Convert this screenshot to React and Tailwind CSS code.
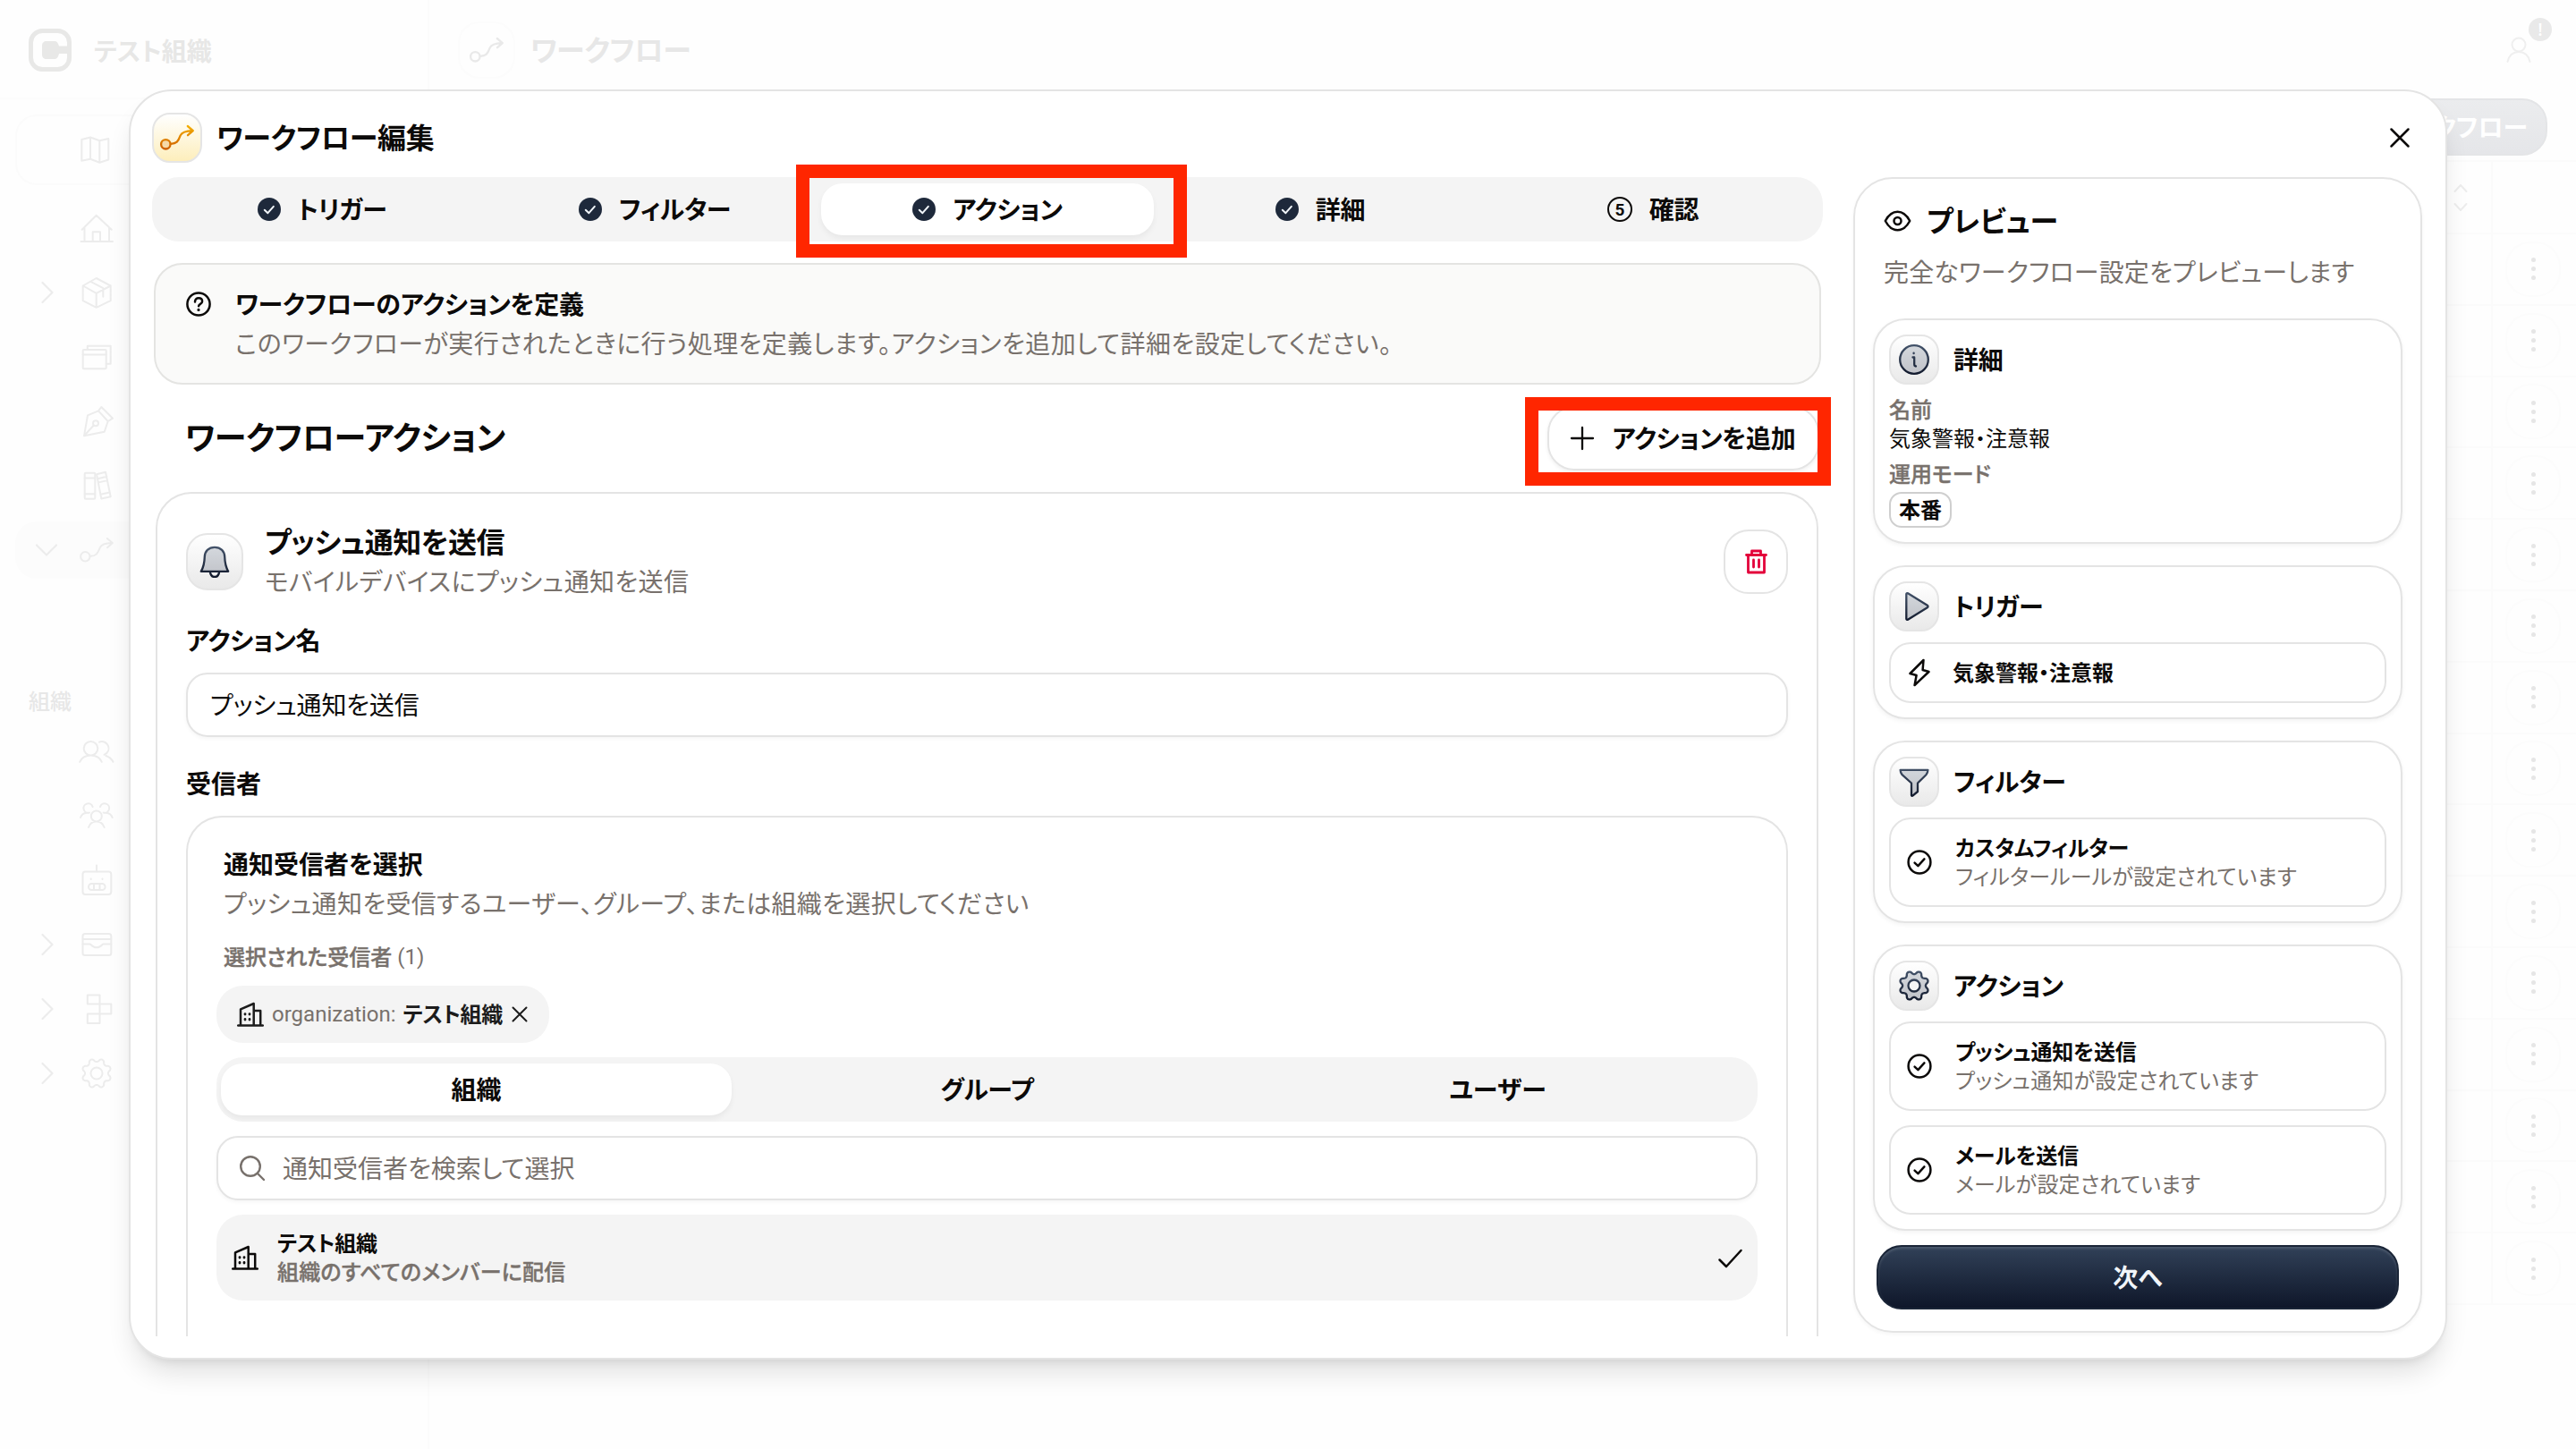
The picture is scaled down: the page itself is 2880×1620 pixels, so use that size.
import clsx from "clsx";

// ── Icons ────────────────────────────────────────────────────────────────────

function Svg({ size = 36, box, className, width = 2, children }) {
    return (
        <svg
            width={size}
            height={size}
            viewBox={box || `0 0 ${size} ${size}`}
            fill="none"
            stroke="currentColor"
            strokeWidth={width}
            strokeLinecap="round"
            strokeLinejoin="round"
            className={clsx("shrink-0 overflow-visible", className)}
        >
            {children}
        </svg>
    );
}

// Eight-toothed cog outline around (18, 18)
const gearOutline = Array.from({ length: 144 }, (_, i) => {
    const a = (i / 144) * Math.PI * 2;
    const wave = Math.cos(a * 8);
    const r = 14.7 - 1.8 * Math.sign(wave) * Math.pow(Math.abs(wave), 0.7);
    return `${i ? "L" : "M"}${(18 + r * Math.sin(a)).toFixed(2)} ${(18 - r * Math.cos(a)).toFixed(2)}`;
}).join("") + "Z";

const shapes = {
    map: <path d="M1.3 6L11 3.5l10.3 3.8 10-2.3v23.5l-10 3.3L11 27.7l-9.7 2zM11 3.5v24.2M21.3 7.3v24.5" />,
    home: <path d="M1.7 19.7l16-16 17 16M4.5 17.5V33M32 17.5V33M.5 33H36M13.7 33V22.3H22V33" />,
    box: <path d="M17.7 2l16 8.5v16.7l-16 7.6-15-7.6V10.5zM2.7 10.5l15 8.3 16-8.3M17.7 18.8v16M11 5.7l14.3 7.5v9.6" />,
    stack: (
        <>
            <rect x="2.7" y="10" width="26" height="21.3" rx="1" />
            <path d="M2.7 15.5h26M7.8 10V5.7h25.9v20h-5" />
        </>
    ),
    pen: (
        <>
            <path d="M4 34.3l4-23 12-5 10.7 11.7-4 11.7zM4 34.3l10.8-11.8M20 6.3L23.3 2 36 14.7 30.7 18" />
            <circle cx="17" cy="20.3" r="3" />
        </>
    ),
    books: (
        <>
            <rect x="4.7" y="3.8" width="11.6" height="29" rx="1" />
            <path d="M4.7 9.5h11.6M4.7 27.2h11.6M18 5.2l10-2.4 5.7 27.4-10.4 2.3zM19.2 10.2l10.2-2.4M20.2 14.4l10-2.3M22.3 27.8l10.4-2.3" />
        </>
    ),
    workflow: (
        <>
            <circle cx="5.3" cy="25.3" r="5.2" />
            <path d="M11 24.8c6.3 0 8.2-2.6 10.7-9.4C23.3 11.8 27 10.3 35.3 10.1M29.8 5l6 5.1-5.8 5.1" />
        </>
    ),
    users: (
        <path d="M11.5 7a7.8 7.8 0 100 15.6 7.8 7.8 0 000-15.6zM-.8 29.8c2.3-5 6.8-7.2 12.3-7.2s10 2.2 12.3 7.2M21 7.6c9-3.4 15.5 9.6 5.5 14.2M28.5 23c3.5 1.2 6.2 3.3 8 6.8" />
    ),
    team: (
        <path d="M17.8 12.5a6 6 0 100 12 6 6 0 000-12zM9 31c1.5-4.3 4.6-6.4 8.8-6.4s7.3 2.1 8.8 6.4M10 14.6A5.2 5.2 0 1113.6 8M0 20c1-3 3.4-5 7-5.2M25.6 14.6A5.2 5.2 0 1022 8M35.6 20c-1-3-3.4-5-7-5.2" />
    ),
    robot: (
        <>
            <rect x="2.5" y="8.5" width="31.8" height="25.5" rx="3" />
            <rect x="9" y="22" width="18.6" height="7" rx="3.5" />
            <path d="M18 1.5v7M15 22v7M21.5 22v7M11.7 16.5v.5M24.5 16.5v.5" />
        </>
    ),
    inbox: (
        <>
            <rect x="2.5" y="6" width="31.8" height="24" rx="2.5" />
            <path d="M2.5 12h31.8M2.5 17.5h8c1.5 0 2 3.8 7.5 3.8s6-3.8 7.5-3.8h8.8" />
        </>
    ),
    nodes: <path d="M7.8 2.5h13.7v10H7.8zM21.5 12.5h12.8v11H21.5zM7.8 23.5h13.7v10.5H7.8zM7.8 12.5h13.7v11" />,
    gear: (
        <>
            <path d={gearOutline} />
            <circle cx="18" cy="18" r="6.5" />
        </>
    ),
    bell: (
        <>
            <path d="M18 1.8C11 1.8 7 6.4 6.8 12.4 6.6 19.3 6 23.4 2.8 28.8h30.4C30 23.4 29.4 19.3 29.2 12.4 29 6.4 25 1.8 18 1.8z" />
            <path fill="none" d="M12.8 29.2c.6 3.8 2.4 5.8 5.2 5.8s4.6-2 5.2-5.8" />
        </>
    ),
    info: (
        <>
            <circle cx="18" cy="18" r="15.8" />
            <path fill="none" d="M16.5 15.5h1.7v7.6c0 1.6.7 2.4 1.8 2.4M17.6 10.6v.6" />
        </>
    ),
    play: <path d="M9.3 4.2v27.6c0 1 .9 1.4 1.7.9l21.8-13.4c1-.6 1-2 0-2.6L11 3.3c-.8-.5-1.7-.1-1.7.9z" />,
    funnel: <path d="M2.6 4.8h30.8c0 2.4-.8 4-2 5.4L22 19.5V29l-5.6 4.6c-.7.5-1.4.1-1.4-.7V19.5L4.6 10.2c-1.2-1.4-2-3-2-5.4z" />,
};

function Icon({ name, className, width }) {
    return <Svg className={className} width={width}>{shapes[name]}</Svg>;
}

// Duotone icon inside a rounded tile
function IconTile({ name, large }) {
    return (
        <div
            className={clsx(
                "flex shrink-0 items-center justify-center border-2 border-[#e5e5e5] bg-linear-to-b from-white to-[#e9e9e9]",
                large ? "size-16 rounded-[24px]" : "size-14 rounded-[20px]"
            )}
        >
            <svg width="36" height="36" viewBox="0 0 36 36" fill={`url(#${name}-fill)`} stroke={`url(#${name}-line)`} strokeWidth="2.3" strokeLinecap="round" strokeLinejoin="round">
                <defs>
                    <linearGradient id={`${name}-line`} gradientUnits="userSpaceOnUse" x1="0" y1="0" x2="0" y2="36">
                        <stop stopColor="#45556c" />
                        <stop offset="1" stopColor="#0f172a" />
                    </linearGradient>
                    <linearGradient id={`${name}-fill`} gradientUnits="userSpaceOnUse" x1="0" y1="0" x2="0" y2="36">
                        <stop stopColor="#d5d9de" />
                        <stop offset="1" stopColor="#bfc1c7" />
                    </linearGradient>
                </defs>
                {name === "gear" ? (
                    <>
                        <path d={gearOutline} />
                        <circle cx="18" cy="18" r="6.5" fill="#f5f5f5" />
                    </>
                ) : shapes[name]}
            </svg>
        </div>
    );
}

function WorkflowTile() {
    return (
        <div className="flex size-14 shrink-0 items-center justify-center rounded-[20px] border-2 border-[#e5e5e5] bg-linear-to-b from-white to-[#fdeebb]">
            <svg width="36" height="36" viewBox="0 0 36 36" fill="none" stroke="url(#flow-line)" strokeWidth="2.3" strokeLinecap="round" strokeLinejoin="round" className="overflow-visible">
                <defs>
                    <linearGradient id="flow-line" gradientUnits="userSpaceOnUse" x1="0" y1="4" x2="0" y2="32">
                        <stop stopColor="#f5b000" />
                        <stop offset="1" stopColor="#cc5a00" />
                    </linearGradient>
                </defs>
                <circle cx="5.3" cy="25.3" r="5.2" fill="#f6d9a8" />
                <path d="M11 24.8c6.3 0 8.2-2.6 10.7-9.4C23.3 11.8 27 10.3 35.3 10.1M29.8 5l6 5.1-5.8 5.1" />
            </svg>
        </div>
    );
}

function Building({ className }) {
    return (
        <svg width="30" height="28" viewBox="0 0 30 28" fill="none" stroke="currentColor" strokeWidth="2.5" strokeLinecap="round" strokeLinejoin="round" className={clsx("shrink-0", className)}>
            <path d="M1.2 26.6h27.6M4 26.6V8.4L18.7 2v24.6M18.7 10h7.5v16.6" />
            <path strokeWidth="2.8" d="M9 13.6v.5M14 13.6v.5M9 19.5v.5M14 19.5v.5" />
        </svg>
    );
}

function CheckBadge() {
    return (
        <Svg size={26} width={2} className="text-[#f1f5f9]">
            <circle cx="13" cy="13" r="13" fill="#1e293b" stroke="none" />
            <path d="M7.8 13.8l3.6 3.4 6.4-7.4" />
        </Svg>
    );
}

function CheckCircle() {
    return (
        <Svg size={28} width={2.5}>
            <circle cx="14" cy="14" r="12.4" />
            <path d="M8.6 14.6l3.8 3.6 7-7.8" />
        </Svg>
    );
}

// ── Page behind the dialog ───────────────────────────────────────────────────

const mainNav = [
    { icon: "home" },
    { icon: "box", caret: "right" },
    { icon: "stack" },
    { icon: "pen" },
    { icon: "books" },
    { icon: "workflow", caret: "down", active: true },
];

const orgNav = [
    { icon: "users" },
    { icon: "team" },
    { icon: "robot" },
    { icon: "inbox", caret: "right" },
    { icon: "nodes", caret: "right" },
    { icon: "gear", caret: "right" },
];

function NavRow({ icon, caret, active }) {
    return (
        <div className="flex h-[72px] items-center">
            <div className={clsx("flex h-16 flex-1 items-center rounded-3xl pl-[23px]", active && "bg-[#fcfcfc]")}>
                <div className="flex w-[50px]">
                    {caret && (
                        <Svg size={24} width={2.2}>
                            <path d={caret === "down" ? "M1 6.5l11 11 11-11" : "M7.5 1l11 11-11 11"} />
                        </Svg>
                    )}
                </div>
                <Icon name={icon} />
            </div>
        </div>
    );
}

function Sidebar() {
    return (
        <aside className="flex w-[480px] shrink-0 flex-col border-r-2 border-[#fbfbfb] text-[#ececec]">
            <div className="flex h-[111px] items-center gap-[25px] border-b-2 border-[#fcfcfc] pt-[2px] pl-8">
                <svg width="48" height="48" viewBox="0 0 48 48" fill="none">
                    <rect x="2.5" y="2.5" width="43" height="43" rx="13" stroke="#e8e8e7" strokeWidth="5" />
                    <path fill="#e8e8e7" d="M20 14h9c3 0 4 2.500 5 5.500h14v8.500H34c-1 3.500-2 6-5 6h-9c-3 0-5-2-5-5V19c0-3 2-5 5-5z" />
                </svg>
                <span className="mt-[2px] text-[28px] font-bold text-[#e7e7e6]">テスト組織</span>
            </div>
            <div className="flex flex-col pl-[17px]">
                <div className="mt-[17px] mb-3 flex h-[79px] items-center rounded-3xl border-2 border-[#fbfbfb] pl-[71px]">
                    <Icon name="map" />
                </div>
                {mainNav.map((item) => <NavRow key={item.icon} {...item} />)}
            </div>
            <div className="mt-[117px] mb-1 pl-8 text-[24px] leading-8 font-medium text-[#e7e7e7]">組織</div>
            <div className="flex flex-col pl-[17px]">
                {orgNav.map((item) => <NavRow key={item.icon} {...item} />)}
            </div>
        </aside>
    );
}

function TableArea() {
    return (
        <main className="flex flex-1 flex-col">
            <header className="flex h-[110px] shrink-0 items-center justify-between pt-[2px] pr-8 pl-8">
                <div className="flex items-center gap-[17px]">
                    <div className="flex size-16 items-center justify-center rounded-3xl border-2 border-[#fcfcfc] text-[#e9e9e9]">
                        <Icon name="workflow" width={2.3} />
                    </div>
                    <span className="text-[32px] font-bold tracking-[-0.3px] text-[#e7e7e7]">ワークフロー</span>
                </div>
                <div className="relative flex size-16 items-center justify-center rounded-full text-[#efefef]">
                    <Svg size={28}>
                        <circle cx="14" cy="8" r="7.500" />
                        <path d="M1.500 27c1.800-7.500 6.500-11 12.500-11s10.700 3.500 12.500 11" />
                    </Svg>
                    <span className="absolute -top-[4px] -right-[5px] flex size-[26px] items-center justify-center rounded-full bg-[#e9e9e9] text-[20px] leading-none font-medium text-white">!</span>
                </div>
            </header>
            <div className="flex h-[71px] shrink-0 justify-end border-b-2 border-[#fbfbfb] pr-8">
                <button className="flex h-16 w-[300px] items-center justify-end rounded-[28px] border-2 border-[#e4e5e7] bg-linear-to-b from-[#ebecee] to-[#e5e6e9] pr-[20px] text-[28px] font-bold text-white">ワークフロー</button>
            </div>
            <div className="flex h-[81px] shrink-0 border-b-2 border-[#fbfbfb]">
                <div className="flex flex-1 items-center justify-end pr-[22px] text-[#ededed]">
                    <Svg size={24}>
                        <path d="M5.500 5l6.500-7 6.500 7M5.500 19l6.500 7 6.500-7" />
                    </Svg>
                </div>
                <div className="w-[95px] border-l-2 border-[#fbfbfb]" />
            </div>
            {Array.from({ length: 15 }, (_, i) => (
                <div key={i} className="flex h-[79.800px] shrink-0 border-b-2 border-[#fbfbfb]">
                    <div className="flex-1" />
                    <div className="flex w-[95px] items-center justify-center border-l-2 border-[#fbfbfb] pr-[3px]">
                        <div className="flex size-[62px] flex-col items-center justify-center gap-[5px] rounded-[28px] border-2 border-[#fcfcfc]">
                            <i className="size-[5px] rounded-full bg-[#e6e6e6]" />
                            <i className="size-[5px] rounded-full bg-[#e6e6e6]" />
                            <i className="size-[5px] rounded-full bg-[#e6e6e6]" />
                        </div>
                    </div>
                </div>
            ))}
        </main>
    );
}

// ── Dialog: left column ──────────────────────────────────────────────────────

const steps = ["トリガー", "フィルター", "アクション", "詳細", "確認"];

function Steps() {
    return (
        <div className="flex h-[72px] items-center rounded-[30px] bg-[#f4f4f4] px-1">
            {steps.map((label, i) => (
                <div
                    key={label}
                    className={clsx(
                        "flex h-[58px] flex-1 items-center justify-center gap-[19px] rounded-[24px] text-[28px] font-bold tracking-[-0.3px]",
                        i === 2 && "bg-white shadow-[0_4px_6px_rgba(0,0,0,0.05)]"
                    )}
                >
                    {i < 4 ? <CheckBadge /> : (
                        <span className="flex size-7 items-center justify-center rounded-full border-[2.5px] border-current font-['Roboto',sans-serif] text-[19px] leading-none">5</span>
                    )}
                    {label}
                </div>
            ))}
        </div>
    );
}

function Recipients() {
    return (
        <div className="flex flex-col gap-4 rounded-t-[40px] border-2 border-b-0 border-[#e4e4e4] px-8 pt-8">
            <div className="mb-2 flex flex-col gap-1 pl-2 text-[28px] leading-10">
                <h4 className="font-bold">通知受信者を選択</h4>
                <p className="tracking-[0.31px] text-[#78716c]">プッシュ通知を受信するユーザー、グループ、または組織を選択してください</p>
            </div>
            <div className="flex items-center gap-1.5 pl-2 text-[24px] leading-8 font-medium text-[#78716c] [-webkit-text-stroke:0.4px]">
                選択された受信者 <span className="font-['Roboto',sans-serif] font-normal [-webkit-text-stroke:0]">(1)</span>
            </div>
            <div className="flex h-16 w-[372px] items-center rounded-[30px] bg-[#f4f4f4] pl-[23px] text-[24px] text-[#1c1c1c]">
                <Building />
                <span className="ml-[9px] font-['Roboto',sans-serif] text-[#78716c]">organization:</span>
                <span className="ml-2 font-bold tracking-[-0.3px]">テスト組織</span>
                <Svg size={16} className="ml-[11px]"><path d="M.5.500l15 15M15.500.500l-15 15" /></Svg>
            </div>
            <div className="flex h-[72px] items-center rounded-[30px] bg-[#f4f4f4] px-[5px] text-[28px] font-bold">
                <div className="flex h-[58px] flex-1 items-center justify-center rounded-[24px] bg-white shadow-[0_4px_6px_rgba(0,0,0,0.05)]">組織</div>
                <div className="flex flex-1 justify-center tracking-[-0.3px]">グループ</div>
                <div className="flex flex-1 justify-center">ユーザー</div>
            </div>
            <div className="flex h-[72px] items-center gap-5 rounded-[24px] border-2 border-[#e4e4e4] px-6 text-[28px] text-[#78716c] shadow-[0_2px_4px_rgba(0,0,0,0.04)]">
                <Svg size={28} width={2.4}>
                    <circle cx="12" cy="12" r="10.800" />
                    <path d="M20 20l7 7" />
                </Svg>
                通知受信者を検索して選択
            </div>
            <div className="flex h-24 items-center rounded-[30px] bg-[#f4f4f4] pr-4 pl-[17px] text-[24px] leading-8">
                <Building />
                <div className="ml-[21px] flex-1">
                    <div className="font-bold tracking-[-0.2px]">テスト組織</div>
                    <div className="font-medium tracking-[0.2px] text-[#78716c] [-webkit-text-stroke:0.4px]">組織のすべてのメンバーに配信</div>
                </div>
                <Svg size={28} width={2.5}><path d="M1.500 16.500l7.500 7.500L25.500 6" /></Svg>
            </div>
            <div className="h-20" />
        </div>
    );
}

function ActionCard() {
    return (
        <div className="mr-[5px] ml-[4px] flex h-[944px] flex-col overflow-hidden rounded-t-[40px] border-2 border-b-0 border-[#e4e4e4] px-8 pt-[34px]">
            <div className="flex items-center">
                <IconTile name="bell" large />
                <div className="ml-6 flex flex-1 flex-col gap-1 leading-10">
                    <h3 className="text-[32px] font-bold tracking-[-0.5px]">プッシュ通知を送信</h3>
                    <p className="text-[28px] tracking-[0.36px] text-[#78716c]">モバイルデバイスにプッシュ通知を送信</p>
                </div>
                <button className="flex size-[72px] items-center justify-center rounded-[28px] border-2 border-[#e4e4e4] text-[#e3003a]">
                    <Svg size={25} box="0 0 25 28" width={2.800} className="h-7">
                        <path d="M1.500 6.500h22M3.500 6.500V26h18V6.500M7.500 6V2h10v4M9.500 12v8M15.500 12v8" />
                    </Svg>
                </button>
            </div>
            <label className="mt-[26px] text-[28px] leading-10 font-bold tracking-[-0.3px]">アクション名</label>
            <div className="mt-4 flex h-[72px] shrink-0 items-center rounded-[24px] border-2 border-[#e4e4e4] px-[25px] text-[28px] tracking-[-0.2px] shadow-[0_2px_4px_rgba(0,0,0,0.04)]">プッシュ通知を送信</div>
            <label className="mt-8 mb-4 text-[28px] leading-10 font-bold">受信者</label>
            <Recipients />
        </div>
    );
}

function Editor() {
    return (
        <section className="flex w-[1868px] shrink-0 flex-col">
            <Steps />
            <div className="mx-[2px] mt-6 flex h-[136px] gap-[27px] rounded-[32px] border-2 border-[#e4e4e2] bg-[#fafaf9] px-[34px] pt-6 text-[28px] leading-10">
                <Svg size={28} width={2.500} className="mt-[6px]">
                    <circle cx="14" cy="14" r="12.600" />
                    <path d="M10 11.500c0-2.600 1.700-4.200 4.100-4.200s4 1.500 4 3.600c0 3-4 2.800-4 5.300" />
                    <circle cx="14" cy="20.400" r=".8" fill="currentColor" strokeWidth="1.600" />
                </Svg>
                <div className="flex flex-col gap-1">
                    <h3 className="font-bold tracking-[-0.2px]">ワークフローのアクションを定義</h3>
                    <p className="tracking-[0.43px] text-[#78716c]">このワークフローが実行されたときに行う処理を定義します。アクションを追加して詳細を設定してください。</p>
                </div>
            </div>
            <div className="my-6 flex h-[72px] items-center justify-between pr-[4px] pl-[37px]">
                <h2 className="text-[36px] font-bold tracking-[-0.35px]">ワークフローアクション</h2>
                <button className="flex h-[72px] w-[304px] items-center justify-center gap-5 rounded-[30px] border-2 border-[#e4e4e4] text-[28px] font-bold tracking-[-0.2px] shadow-[0_2px_4px_rgba(0,0,0,0.06)]">
                    <Svg size={26} width={2.300}><path d="M13 1v24M1 13h24" /></Svg>
                    アクションを追加
                </button>
            </div>
            <ActionCard />
        </section>
    );
}

// ── Dialog: preview column ───────────────────────────────────────────────────

function PreviewCard({ icon, title, children }) {
    return (
        <div className="flex flex-col rounded-[36px] border-2 border-[#e4e4e4] p-4 shadow-[0_2px_5px_rgba(0,0,0,0.05)]">
            <div className="mb-3 flex items-center gap-4">
                <IconTile name={icon} />
                <h4 className="text-[28px] leading-10 font-bold tracking-[-0.2px]">{title}</h4>
            </div>
            {children}
        </div>
    );
}

function PreviewItem({ title, note }) {
    return (
        <div className="flex h-[100px] items-center gap-[26px] rounded-[24px] border-2 border-[#e4e4e4] pl-[18px] text-[24px] leading-8">
            <CheckCircle />
            <div>
                <div className="font-bold tracking-[-0.2px]">{title}</div>
                <div className="tracking-[0.2px] text-[#78716c]">{note}</div>
            </div>
        </div>
    );
}

function Preview() {
    return (
        <section className="mr-[2px] flex h-[1292px] w-[636px] flex-col rounded-[44px] border-2 border-[#e4e4e4] px-5 pt-[27px] shadow-[0_2px_4px_rgba(0,0,0,0.04)]">
            <div className="flex items-center gap-[17px] pl-3">
                <svg width="31" height="24" viewBox="0 0 31 24" fill="none" stroke="currentColor" strokeWidth="2.500" strokeLinejoin="round">
                    <path d="M1.800 12C5.500 5 10 1.800 15.500 1.800S25.500 5 29.200 12C25.500 19 21 22.200 15.500 22.200S5.500 19 1.800 12z" />
                    <circle cx="15.500" cy="12" r="4" />
                </svg>
                <h2 className="text-[32px] leading-10 font-bold">プレビュー</h2>
            </div>
            <p className="mt-[17px] mb-8 pl-3 text-[28px] leading-10 tracking-[0.15px] text-[#78716c]">完全なワークフロー設定をプレビューします</p>
            <div className="flex flex-col gap-6">
                <PreviewCard icon="info" title="詳細">
                    <div className="flex flex-col items-start text-[24px] leading-8">
                        <span className="font-medium text-[#78716c] [-webkit-text-stroke:0.4px]">名前</span>
                        <span>気象警報・注意報</span>
                        <span className="mt-2 font-medium text-[#78716c] [-webkit-text-stroke:0.4px]">運用モード</span>
                        <span className="mt-1 flex h-10 items-center rounded-[14px] border-2 border-[#cfcfcf] px-[9px] font-bold">本番</span>
                    </div>
                </PreviewCard>
                <PreviewCard icon="play" title="トリガー">
                    <div className="flex h-[68px] items-center gap-[21px] rounded-[24px] border-2 border-[#e4e4e4] pl-4 text-[24px] font-bold">
                        <Svg size={32} width={2.500}>
                            <path d="M20.500 2L5.500 17l7.100 2-2 11L26.500 15l-6.900-2z" />
                        </Svg>
                        気象警報・注意報
                    </div>
                </PreviewCard>
                <PreviewCard icon="funnel" title="フィルター">
                    <PreviewItem title="カスタムフィルター" note="フィルタールールが設定されています" />
                </PreviewCard>
                <PreviewCard icon="gear" title="アクション">
                    <div className="flex flex-col gap-4">
                        <PreviewItem title="プッシュ通知を送信" note="プッシュ通知が設定されています" />
                        <PreviewItem title="メールを送信" note="メールが設定されています" />
                    </div>
                </PreviewCard>
            </div>
            <button className="mx-1 mt-4 flex h-[72px] items-center justify-center rounded-[28px] border-2 border-[#1a2537] bg-linear-to-b from-[#314158] to-[#0f172a] text-[28px] font-bold text-[#f1f5f9] shadow-[inset_0_2px_3px_rgba(255,255,255,0.15)]">次へ</button>
        </section>
    );
}

export default function App() {
    return (
        <div className="relative flex h-[1620px] w-[2880px] overflow-hidden bg-[#fefefe] font-['Noto_Sans','Noto_Sans_CJK_JP',sans-serif] text-[#0c0a09] [font-feature-settings:'palt']">
            <Sidebar />
            <TableArea />

            <div className="absolute top-[100px] left-[144px] flex h-[1420px] w-[2592px] flex-col rounded-[48px] border-2 border-[#e4e4e4] bg-white px-6 pt-6 shadow-[0_20px_30px_-6px_rgba(0,0,0,0.12),0_8px_12px_-8px_rgba(0,0,0,0.12)]">
                <div className="mb-4 flex h-14 items-center justify-between pr-4">
                    <div className="flex items-center gap-4">
                        <WorkflowTile />
                        <h1 className="text-[32px] font-bold tracking-[-0.2px]">ワークフロー編集</h1>
                    </div>
                    <Svg size={22} width={2.500}><path d="M1.500 1.500l19 19M20.500 1.500l-19 19" /></Svg>
                </div>
                <div className="flex justify-between">
                    <Editor />
                    <Preview />
                </div>
            </div>

            {/* Callout frames over the current step and the add button */}
            <div className="absolute top-[184px] left-[890px] h-[104px] w-[437px] border-[15px] border-[#ff2600]" />
            <div className="absolute top-[444px] left-[1705px] h-[99px] w-[342px] border-[15px] border-[#ff2600]" />
        </div>
    );
}
